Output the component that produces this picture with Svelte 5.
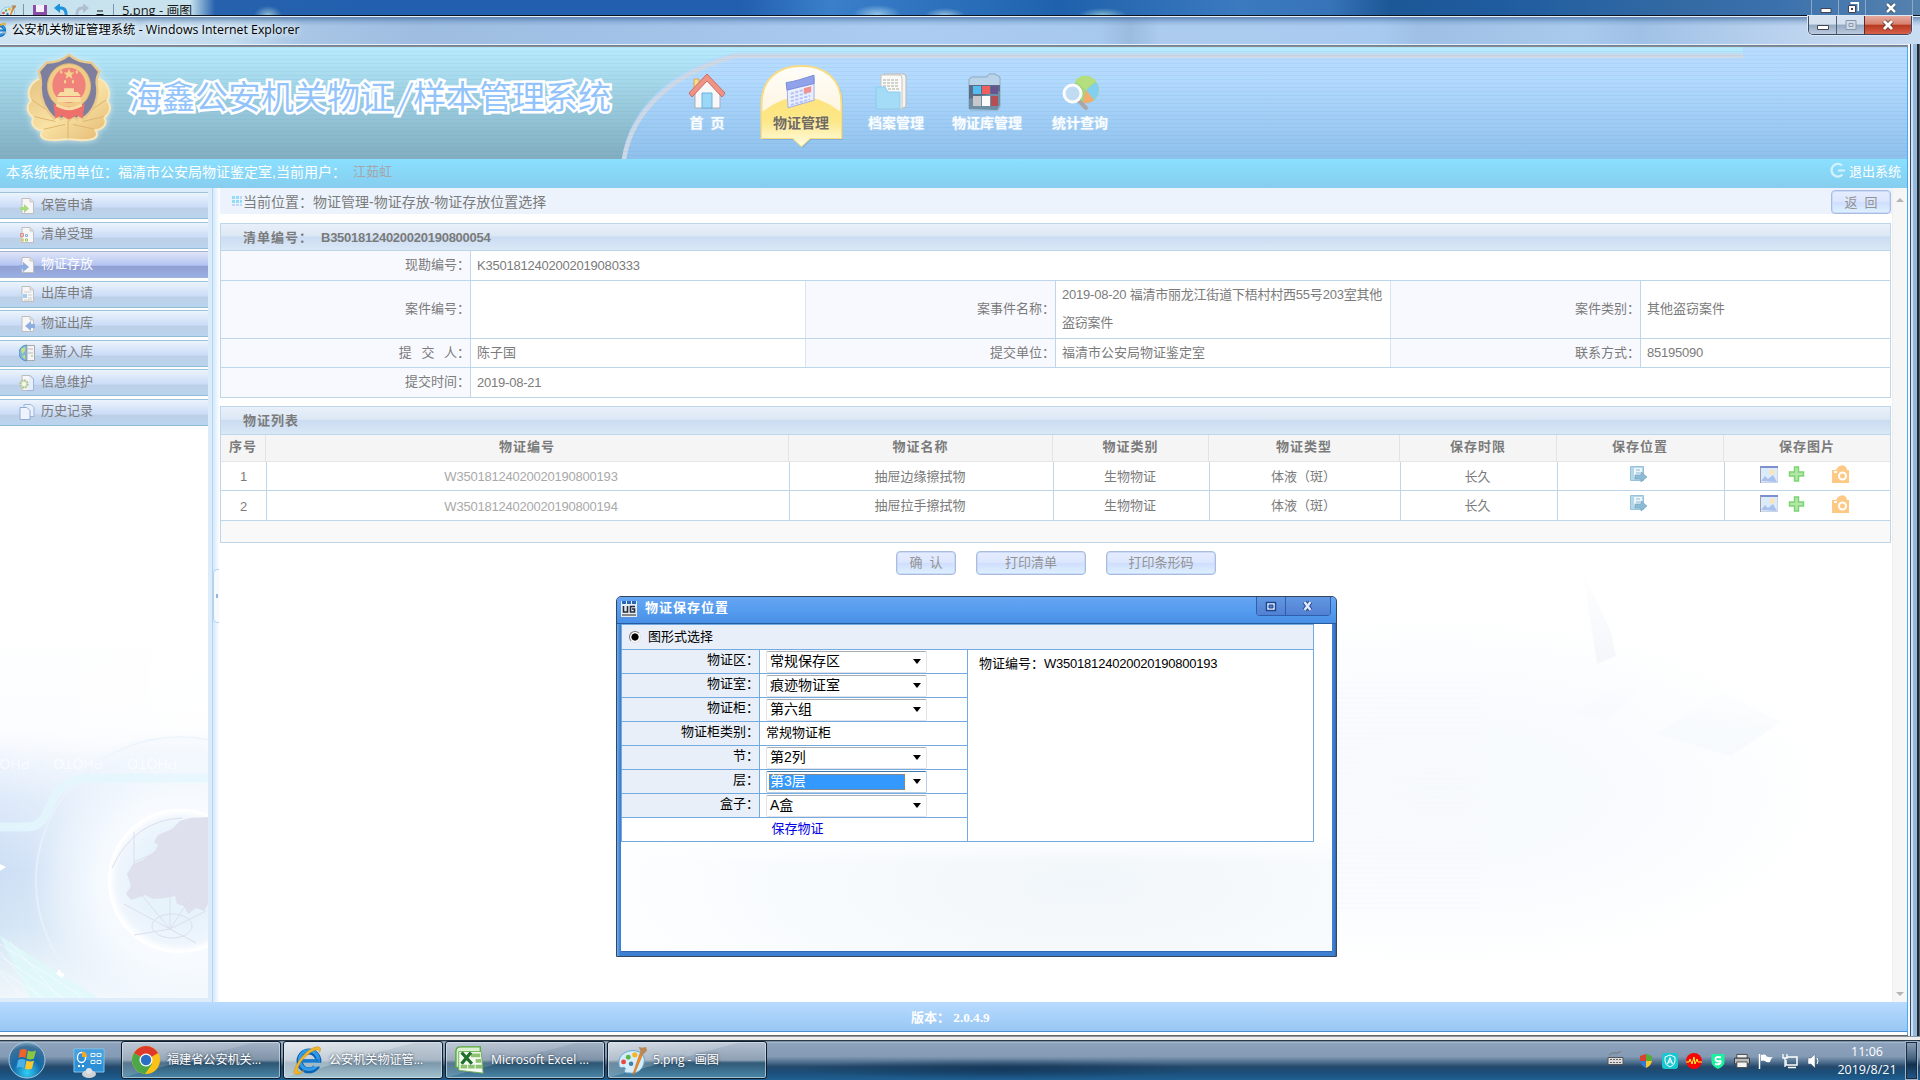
<script>
  const nav = [
    { label: '首 页', icon: 'home' },
    { label: '物证管理', icon: 'calendar', active: true },
    { label: '档案管理', icon: 'docs' },
    { label: '物证库管理', icon: 'box' },
    { label: '统计查询', icon: 'search' }
  ];
  const menu = [
    { label: '保管申请', icon: 'in' },
    { label: '清单受理', icon: 'list' },
    { label: '物证存放', icon: 'store', active: true },
    { label: '出库申请', icon: 'page' },
    { label: '物证出库', icon: 'out' },
    { label: '重新入库', icon: 'globe' },
    { label: '信息维护', icon: 'gear' },
    { label: '历史记录', icon: 'copy' }
  ];
  const heads = ['序号', '物证编号', '物证名称', '物证类别', '物证类型', '保存时限', '保存位置', '保存图片'];
  const rows = [
    ['1', 'W35018124020020190800193', '抽屉边缘擦拭物', '生物物证', '体液（斑）', '长久'],
    ['2', 'W35018124020020190800194', '抽屉拉手擦拭物', '生物物证', '体液（斑）', '长久']
  ];
  const fields = [
    { label: '物证区：', value: '常规保存区', select: true },
    { label: '物证室：', value: '痕迹物证室', select: true },
    { label: '物证柜：', value: '第六组', select: true },
    { label: '物证柜类别：', value: '常规物证柜' },
    { label: '节：', value: '第2列', select: true },
    { label: '层：', value: '第3层', select: true, focus: true },
    { label: '盒子：', value: 'A盒', select: true }
  ];
  const tasks = [
    { label: '福建省公安机关...', icon: 'chrome' },
    { label: '公安机关物证管...', icon: 'ie', active: true },
    { label: 'Microsoft Excel ...', icon: 'excel' },
    { label: '5.png - 画图', icon: 'paint', lit: true }
  ];
</script>

{#snippet ieLogo(size)}
  <svg width={size} height={size} viewBox="0 0 32 32">
    <circle cx="17" cy="17" r="10" fill="none" stroke="#0b62b4" stroke-width="6.5" />
    <circle cx="17" cy="16" r="10" fill="none" stroke="#2f9be8" stroke-width="3.5" />
    <path d="M11 15h13v4H11z" fill="#d9effc" />
    <path d="M8 15h20v4H8z" fill="#1a7acb" />
    <path d="M22 19h9v4h-9z" fill="#9fb9c9" />
    <path d="M29 3C25-1 14 6 7 16S-1 33 5 31c2 0 5-2 7-4-4 2-7 3-7 0 0-5 5-12 11-17S29 3 28 8c1-1 2-3 1-5z" fill="#f2b527" stroke="#c98a12" stroke-width=".5" />
  </svg>
{/snippet}

{#snippet palette(size)}
  <svg width={size} height={size} viewBox="0 0 32 32">
    <path d="M2 19C2 11 9 6 17 6s13 5 12 12-6 12-13 12c-4 0-8 0-8-2s2-3 0-4-6 3-6-5z" fill="#d5ecf9" stroke="#5fa5cf" />
    <circle cx="7" cy="18" r="2.6" fill="#e8473c" /><circle cx="12" cy="13" r="2.6" fill="#5cb548" /><circle cx="19" cy="10.500" r="2.800" fill="#f6b52d" /><circle cx="15" cy="20" r="2.400" fill="#3f7fa8" />
    <path d="M24 10l3 1-9 21-1-1z" fill="#ef8a24" stroke="#b9600f" stroke-width=".5" />
    <path d="M24 10l1-4-2-4 4 1 4-1 1 4-5 5z" fill="#b98655" />
  </svg>
{/snippet}

{#snippet navIcon(name)}
  <svg class="nicon" width="38" height="38" viewBox="0 0 38 38">
    {#if name === 'home'}
      <path d="M6 19V7h5v7" fill="#f7dc8a" stroke="#d9a352" />
      <path d="M7 19L19 6l13 14v16H7z" fill="#f8f8fa" stroke="#a9adb8" />
      <path d="M14 21h10v15H14z" fill="#9bd8f7" stroke="#6eb0d8" />
      <path d="M19 2L1 21l3 4L19 9l15 16 3-4z" fill="#f09384" stroke="#c86d63" />
    {:else if name === 'calendar'}
      <path d="M4 14l29-9v24L5 37z" fill="#e9efff" stroke="#9aa8e8" />
      <path d="M3 10c9-1 20-5 30-8v9L4 18z" fill="#8fa2ea" stroke="#7487d6" />
      <path d="M8 22l20-6M8 26l21-6M8 30l21-6M8 34l21-6" stroke="#b3c2f6" stroke-width="2" stroke-dasharray="3.500 1.500" />
      <path d="M22 16l8-2v6l-8 2z" fill="#f0928e" />
    {:else if name === 'docs'}
      <path d="M12 2h19q3 0 3 3v28q0 3-3 3H15z" fill="#f4f4f1" stroke="#bab9b6" />
      <path d="M9 3h18q3 0 3 3v31H9z" fill="#fafaf7" stroke="#c5c4c0" />
      <path d="M11 8h16M11 11h16M11 14h16M16 17h11" stroke="#a9a9a5" stroke-dasharray="3 1" />
      <path d="M4 15h9l3 5h12v17H4z" fill="#a4dcf8" stroke="#8accee" />
    {:else if name === 'box'}
      <path d="M4 6l3-2h15l2-3h6l5 3v30l-2 3H6l-2-1z" fill="#b9d3e8" stroke="#8fa9bf" />
      <path d="M4 12v24l28 1 3-5V12z" fill="#5a6d84" />
      <path d="M4 26l31-8v14l-3 5H4z" fill="#8fcfe4" opacity=".35" />
      <path d="M8 13h8v8H8z" fill="#53bdf1" /><path d="M17 13h8v8h-8z" fill="#ee5f5d" /><path d="M26 13h7v8h-7z" fill="#66558e" />
      <path d="M8 23h8v10H8z" fill="#c8c8cc" /><path d="M17 23h8v10h-8z" fill="#fbfbfb" /><path d="M26 23h7v10h-7z" fill="#b64f54" />
    {:else}
      <circle cx="24" cy="17" r="13" fill="#a4d57a" />
      <path d="M24 17L13 8a13 13 0 0 1 21 0z" fill="#b4df7f" /><path d="M24 17l10-8a13 13 0 0 1-2 18z" fill="#83cff0" /><path d="M24 17l8 10a13 13 0 0 1-11 3z" fill="#f5ab70" />
      <path d="M17 28l7 7" stroke="#a9a8a8" stroke-width="4" stroke-linecap="round" />
      <circle cx="10.500" cy="20.500" r="8.500" fill="#bfdcf3" stroke="#fdfdfd" stroke-width="3" />
    {/if}
  </svg>
{/snippet}

{#snippet menuIcon(name)}
  <svg width="16" height="18" viewBox="0 0 16 18">
    {#if name === 'globe'}
      <path d="M8 1a8 8 0 0 0 0 16z" fill="#7fb6dc" stroke="#5795c2" /><path d="M2 5l4-2v4l-3 3zM3 12l3-1v4z" fill="#c9e07e" />
      <path d="M8 1.500h7.500v15H8z" fill="#f4f4f6" stroke="#aaa" /><path d="M9 5h5M9 9h5" stroke="#bbb" /><path d="M12 12h2" stroke="#8c7" />
    {:else if name === 'copy'}
      <path d="M5 1.500h7l3 3v9H5z" fill="#e8f0fc" stroke="#9fb4d8" /><path d="M1 4.500h7l3 3v9H1z" fill="#eef4fd" stroke="#93abd4" />
    {:else}
      <path d="M3 1.500h8l3.500 3.500v11.500H3z" fill="#f7f7f7" stroke="#bfbdbd" /><path d="M11 1.500V5h3.500" fill="#ddd" stroke="#c9c9c9" />
      {#if name === 'in'}
        <path d="M1 10h4V7l5 4.500L5 16v-3H1z" fill="#a8d97f" />
      {:else if name === 'list'}
        <path d="M1.500 7.500h3v3h-3z" fill="none" stroke="#e98a76" /><path d="M6.500 8.500h2v2h-2z" fill="none" stroke="#8fabe3" /><path d="M2.500 13h2v2h-2z" fill="none" stroke="#e8c558" /><path d="M6.500 13h2v2h-2z" fill="none" stroke="#97c76d" />
      {:else if name === 'store'}
        <path d="M0 9h4V6l6 5-6 5v-3H0z" fill="#8fabe0" />
      {:else if name === 'page'}
        <path d="M5 7h7M9 10h4M9 13h4M5 15h8" stroke="#cfcfcf" /><path d="M4 9h4v4H4z" fill="#9fcdf3" />
      {:else if name === 'out'}
        <path d="M16 9h-4V6l-6 5 6 5v-3h4z" fill="#8fadde" />
      {:else}
        <path d="M11 1.500l3.500 3.500v11.500H8" fill="#e6eefc" stroke="#9fb4d8" />
        <circle cx="5" cy="10" r="3.500" fill="#f4f6ea" stroke="#b5c79a" stroke-width="2.500" stroke-dasharray="2 .7" />
      {/if}
    {/if}
  </svg>
{/snippet}

<div class="screen">
  <div class="paintbar">
    <div class="quick">
      {@render palette(16)}
      <i class="sep"></i>
      <svg width="14" height="15" viewBox="0 0 14 15"><path d="M0 1h14v14H0z" fill="#8a4ea6" /><path d="M3 1h8v7H3z" fill="#f6effa" /><path d="M4 11h6v4H4z" fill="#e2d0ec" /></svg>
      <svg width="14" height="15" viewBox="0 0 14 15"><path d="M2 4h5q6 0 5 10" fill="none" stroke="#1f93dc" stroke-width="3" /><path d="M0 4l6-5v10z" fill="#1f93dc" /></svg>
      <svg width="14" height="15" viewBox="0 0 14 15"><path d="M12 4H7Q1 4 2 14" fill="none" stroke="#aebfd2" stroke-width="3" /><path d="M14 4L8-1v10z" fill="#aebfd2" /></svg>
      <svg class="drop" width="8" height="8" viewBox="0 0 8 8"><path d="M1 1h6" stroke="#111" /><path d="M0 4h8L4 8z" fill="#111" /></svg>
      <i class="sep"></i>
      <span>5.png - 画图</span>
    </div>
    <div class="pctl">
      <span><svg width="12" height="12" viewBox="0 0 12 12"><path d="M1 6.500h10v4H1z" fill="#fff" stroke="#445" /></svg></span>
      <span><svg width="12" height="12" viewBox="0 0 12 12"><path d="M3.500 1h8v8" fill="none" stroke="#fff" stroke-width="2" /><path d="M1.500 3.500h7v7h-7z" fill="#fff" stroke="#445" /><path d="M4 6h2v2H4z" fill="#445" /></svg></span>
      <span class="wide"><svg width="12" height="12" viewBox="0 0 12 12"><path d="M2 2l8 8M10 2l-8 8" stroke="#345" stroke-width="4" /><path d="M2 2l8 8M10 2l-8 8" stroke="#fff" stroke-width="2.500" /></svg></span>
    </div>
  </div>

  <div class="titlebar">
    <span class="tlogo">{@render ieLogo(16)}</span>
    <span class="ttext">公安机关物证管理系统 - Windows Internet Explorer</span>
    <div class="wctl">
      <span class="wmin"><svg width="12" height="12" viewBox="0 0 12 12"><path d="M.5 6.500h11v4H.5z" fill="#fff" stroke="#445" /></svg></span>
      <span class="wmax"><svg width="12" height="12" viewBox="0 0 12 12"><path d="M1 1.500h10v9H1z" fill="#cfdaea" stroke="#8a97a9" /><path d="M4 4.500h4v3H4z" fill="none" stroke="#8a97a9" /></svg></span>
      <span class="wclose"><svg width="14" height="12" viewBox="0 0 14 12"><path d="M3 2l8 8M11 2l-8 8" stroke="#5b2c2c" stroke-width="4.500" /><path d="M3 2l8 8M11 2l-8 8" stroke="#fff" stroke-width="3" /></svg></span>
    </div>
  </div>

  <div class="frame">
    <div class="page">
      <header>
        <svg class="arch" width="1907" height="112" viewBox="0 0 1907 112">
          <defs>
            <linearGradient id="sky" x1="0" y1="0" x2="0" y2="1"><stop offset="0" stop-color="#b8dcff" /><stop offset=".3" stop-color="#b2d9fe" /><stop offset="1" stop-color="#8ec0ec" /></linearGradient>
            <pattern id="scan" width="4" height="4" patternUnits="userSpaceOnUse"><path d="M0 .5h4" stroke="#4d8fb5" stroke-opacity=".09" /></pattern>
          </defs>
          <path d="M622 112C628 62 670 22 734 6H1743V0h165v112z" fill="url(#sky)" />
          <path d="M624 112C632 64 672 26 735 9H1743" fill="none" stroke="#cdd9e6" stroke-width="4.500" />
          <path d="M0 0h1908v112H0z" fill="url(#scan)" />
        </svg>
        <svg class="badge" width="90" height="90" viewBox="0 0 92 92">
          <defs><linearGradient id="gold" x1="0" y1="0" x2="1" y2="1"><stop offset="0" stop-color="#e6c382" /><stop offset=".5" stop-color="#f9e2a4" /><stop offset="1" stop-color="#e3b76f" /></linearGradient></defs>
          <path d="M14 28C4 34 3 44 7 50 1 56 4 64 10 67c-4 5 0 13 9 13-6 9 4 12 26 9 22 3 34 0 28-9 8-1 13-7 9-13 6-4 8-12 3-17 4-7 2-17-7-22z" fill="url(#gold)" stroke="#fae8ba" stroke-width="2" />
          <path d="M8 49l18 12M10 66l22 5M20 79l22-5M84 49L66 61M82 66l-22 5M72 79l-22-5M45 65v24" stroke="#dcb56e" fill="none" />
          <path d="M46 3c7 6 15 8 23 8l8 9c-2 5-4 9-2 17 1 15-7 26-15 31l-3-3-3 4-4-3-4 4-4-4-4 3-4-4-3 3C23 60 17 49 17 37c1-8 0-12-2-17l8-9c8 0 16-2 23-8z" fill="#7e7e9f" stroke="#e9c98c" stroke-width="2.500" />
          <ellipse cx="46" cy="35" rx="22" ry="23" fill="#f1cc89" stroke="#e0b873" />
          <ellipse cx="46" cy="34" rx="17" ry="18" fill="#f0827c" />
          <path d="M30 53l8 3h16l8-3-2 15-6-3-8 4-8-4-6 3z" fill="#ed706b" />
          <path d="M46 17l1.500 4h4l-3 2.500 1 4-3.500-2.500-3.500 2.500 1-4-3-2.500h4z" fill="#f6d48c" /><path d="M38 19v3M54 19v3M42 29v3M50 29v3" stroke="#f6d48c" stroke-width="2" />
          <path d="M37 41h18l3 4H34zM34 46h24v5H34zM41 37h10v4H41z" fill="#f8dda2" />
          <path d="M33 54q13 8 26 0" stroke="#f8dda2" stroke-width="3" fill="none" />
        </svg>
        <h1><span>海鑫公安机关物证</span><b>/</b><span>样本管理系统</span></h1>
        <nav>
          {#each nav as n}
            <a class={['n-' + n.icon, { active: n.active }]}>
              {#if n.active}
                <svg class="bubble" width="85" height="86" viewBox="0 0 85 86">
                  <defs><linearGradient id="yel" x1="0" y1="0" x2="0" y2="1"><stop offset="0" stop-color="#fde37c" /><stop offset=".5" stop-color="#fde788" /><stop offset="1" stop-color="#fffde6" /></linearGradient>
                  <linearGradient id="cream" x1="0" y1="0" x2="0" y2="1"><stop offset="0" stop-color="#fffefa" /><stop offset="1" stop-color="#fbeecb" /></linearGradient></defs>
                  <path d="M3 76V40C3 17 19 3 43 3s40 14 40 37v36H51l-8 8-8-8H3z" fill="#5b88ad" opacity=".3" />
                  <path d="M1.500 74V40C1.500 15 18 2 41.500 2s40 13 40 38v34H50l-8.500 8L33 74z" fill="url(#cream)" stroke="#f6dc84" stroke-width="2" />
                  <path d="M2 74V48q39-31 79 0v26H50l-8.500 8L33 74z" fill="url(#yel)" />
                </svg>
              {/if}
              {@render navIcon(n.icon)}
              <span>{n.label}</span>
            </a>
          {/each}
        </nav>
      </header>

      <div class="userbar">
        <span>本系统使用单位：福清市公安局物证鉴定室,当前用户：</span><em>江茹虹</em>
        <a class="logout"><svg width="17" height="17" viewBox="0 0 17 17"><path d="M12 3.500A6.300 6.300 0 1 0 12.500 12.500" fill="none" stroke="#d3f2ff" stroke-width="2.200" /><path d="M8 8.500h7" stroke="#d3f2ff" stroke-width="2" /></svg><span>退出系统</span></a>
      </div>

      <div class="body">
        <aside>
          <div class="menu">
            {#each menu as m}
              <a class={{ active: m.active }}>{@render menuIcon(m.icon)}<span>{m.label}</span></a>
            {/each}
          </div>
          <svg class="world" width="208" height="398" viewBox="0 0 208 398">
            <defs>
              <linearGradient id="wbg" x1="0" y1="0" x2="0" y2="1"><stop offset="0" stop-color="#fff" /><stop offset=".33" stop-color="#fcfdff" /><stop offset=".5" stop-color="#deeafa" /><stop offset=".68" stop-color="#cddff5" /><stop offset=".82" stop-color="#d3e5f5" /><stop offset="1" stop-color="#f0f7fb" /></linearGradient>
              <linearGradient id="wash" x1="0" y1="0" x2="1" y2="0"><stop offset="0" stop-color="#fff" stop-opacity="0" /><stop offset="1" stop-color="#fff" stop-opacity=".7" /></linearGradient>
              <radialGradient id="halo" gradientUnits="userSpaceOnUse" cx="180" cy="281" r="152"><stop offset="0" stop-color="#fff" /><stop offset=".55" stop-color="#f7fbff" stop-opacity=".9" /><stop offset=".8" stop-color="#eef5fd" stop-opacity=".6" /><stop offset="1" stop-color="#e4effb" stop-opacity="0" /></radialGradient>
              <radialGradient id="ball"><stop offset=".6" stop-color="#e7f3fb" /><stop offset=".88" stop-color="#eef5fd" /><stop offset="1" stop-color="#fff" /></radialGradient>
            </defs>
            <path d="M0 0h208v398H0z" fill="url(#wbg)" />
            <path d="M0 0h208v398H0z" fill="url(#wash)" />
            <circle cx="180" cy="281" r="152" fill="url(#halo)" />
            <circle cx="180" cy="281" r="144" fill="none" stroke="#e9f3fc" stroke-width="2" opacity=".7" />
            <path d="M0 227h26c34 0 12-49 66-49h116" fill="none" stroke="#e3f6fc" stroke-width="9" opacity=".8" />
            <circle cx="180" cy="281" r="71" fill="url(#ball)" stroke="#fff" stroke-width="2" />
            <path d="M208 217l-18 1-10 3-8 8-14 6-4 7 4 3-3 6-12 9-10 4-6 10 4 12-5 8 5 6 6-2 8-3 8 4 12-1 10-2 2 8 7 2 4 8 8-6 8 3 4-7z" fill="#dfe0ee" />
            <path d="M170 329l-46-25M170 329l-30-36M170 329V288M170 329l24-36M170 329l36-18M170 329l-36 6M170 329l26 14M112 268q22-48 70-50M134 232v36M134 262l24-10" stroke="#dddeed" fill="none" />
            <ellipse cx="172" cy="326" rx="20" ry="12" fill="none" stroke="#dddeed" />
            <path d="M0 336l98 62H30z" fill="#dff9fa" opacity=".8" />
            <path d="M0 344l84 54M0 356l64 42M0 370l44 28M10 342l50 56M0 352l40 46M0 372l22 26" stroke="#fff" stroke-opacity=".5" fill="none" />
            <path d="M0 264l6 3-6 4zM56 374l3-5 3 4 3 1-3 4-3-2z" fill="#fff" />
            <text class="ph" transform="translate(30 159) rotate(180)">PHOTO</text>
            <text class="ph" transform="translate(103 159) rotate(180)">PHOTO</text>
            <text class="ph" transform="translate(177 159) rotate(180)">PHOTO</text>
          </svg>
        </aside>
        <div class="split"><i></i></div>

        <main>
          <svg class="backdrop" width="1092" height="490" viewBox="0 0 1092 490">
            <defs>
              <radialGradient id="fog"><stop offset="0" stop-color="#f6fafd" /><stop offset=".6" stop-color="#fafcfe" /><stop offset="1" stop-color="#fff" stop-opacity="0" /></radialGradient>
              <linearGradient id="fadeup" x1="0" y1="0" x2="0" y2="1"><stop offset="0" stop-color="#f4f6fa" stop-opacity="0" /><stop offset="1" stop-color="#f4f6fa" /></linearGradient>
              <linearGradient id="pad" x1="0" y1="0" x2="0" y2="1"><stop offset="0" stop-color="#f6fafc" stop-opacity="0" /><stop offset="1" stop-color="#f6fafc" /></linearGradient>
              <pattern id="rule" width="5" height="5" patternUnits="userSpaceOnUse"><path d="M0 1h5" stroke="#f7f9fc" stroke-opacity=".6" stroke-width="2" /></pattern>
            </defs>
            <ellipse cx="640" cy="280" rx="450" ry="205" fill="url(#fog)" />
            <path d="M480 170h200v230H480z" fill="url(#rule)" />
            <path d="M783 60l28 60 5 24-19 8z" fill="url(#fadeup)" />
            <path d="M770 200l60-32 15 8-40 32zM856 222l65-42 60 30-50 34z" fill="url(#pad)" />
          </svg>
          <div class="crumb">
            <svg width="10" height="10" viewBox="0 0 10 10"><path d="M0 0h3v3H0zM4 0h3v3H4zM0 4h3v3H0zM4 4h3v3H4zM8 4h2v3H8z" fill="#93dcf5" /><path d="M8 0h2v3H8zM0 8h3v2H0zM4 8h3v2H4zM8 8h2v2H8z" fill="#bcd8fb" /></svg>
            <span>当前位置：物证管理-物证存放-物证存放位置选择</span>
            <button class="btn back">返&nbsp; 回</button>
          </div>

          <section class="info">
            <div class="cap">清单编号：<span class="num">B35018124020020190800054</span></div>
            <div class="r one"><label>现勘编号：</label><p class="num low">K3501812402002019080333</p></div>
            <div class="r three tall">
              <label>案件编号：</label><p></p>
              <label>案事件名称：</label><p class="num">2019-08-20 福清市丽龙江街道下梧村村西55号203室其他盗窃案件</p>
              <label>案件类别：</label><p>其他盗窃案件</p>
            </div>
            <div class="r three short">
              <label class="spread">提 交 人：</label><p>陈子国</p>
              <label>提交单位：</label><p>福清市公安局物证鉴定室</p>
              <label>联系方式：</label><p class="num">85195090</p>
            </div>
            <div class="r one last"><label>提交时间：</label><p class="num low">2019-08-21</p></div>
          </section>

          <section class="list">
            <div class="cap">物证列表</div>
            <div class="g head">{#each heads as h}<span>{h}</span>{/each}</div>
            {#each rows as row}
              <div class="g row">
                {#each row as c, i}<span class={{ num: i < 2, code: i === 1 }}>{c}</span>{/each}
                <span class="loc">
                  <svg width="18" height="17" viewBox="0 0 18 17"><path d="M.5.500h13v14H.5z" fill="#b5d7ea" stroke="#98c2da" /><path d="M4 2h8v9H4z" fill="#edf6fb" /><path d="M6 4h4M6 7h4" stroke="#8db8d2" /><path d="M5 9h6V6l6 5-6 5v-3H5z" fill="#8fbcd5" stroke="#6aa0bf" stroke-width=".6" /></svg>
                </span>
                <span class="pics">
                  <svg width="18" height="17" viewBox="0 0 18 17"><path d="M.5.500h17v16H.5z" fill="#dcebfb" stroke="#c9d4e8" /><path d="M0 1h18" stroke="#7d8fcd" stroke-width="2" /><path d="M.5 1v16" stroke="#9a9eaa" /><circle cx="12" cy="6" r="2.500" fill="#fde3b0" /><path d="M1 15l4-5 3 3 5-4 4 7z" fill="#a9c1ec" /></svg>
                  <svg width="17" height="16" viewBox="0 0 17 16"><path d="M6.500 1h4v5h5v4h-5v5h-4v-5h-5V6h5z" fill="#b2e8a5" stroke="#7ed474" stroke-width="1.500" /></svg>
                  <svg width="17" height="18" viewBox="0 0 17 18"><path d="M0 5h4l2-3q5-3.500 8 0l1 3h2v13H0z" fill="#fdc985" /><circle cx="10.500" cy="11" r="3.500" fill="none" stroke="#fff" stroke-width="2" /><path d="M2 6h3v2H2z" fill="#fff" /></svg>
                </span>
              </div>
            {/each}
            <div class="foot"></div>
          </section>

          <div class="actions">
            <button class="btn">确&nbsp; 认</button>
            <button class="btn mid">打印清单</button>
            <button class="btn mid">打印条形码</button>
          </div>
        </main>

        <div class="scroll"><i class="up"></i><i class="down"></i></div>
      </div>

      <footer><span>版本：</span> 2.0.4.9</footer>
    </div>
  </div>
  <div class="under"></div>

  <div class="dialog">
    <div class="dhead">
      <svg width="16" height="16" viewBox="0 0 16 16"><path d="M0 0h16v16H0z" fill="#e8edf2" /><path d="M1 0h4v3H1zM6 0h4v3H6zM11 0h4v3h-4z" fill="#2c67b5" /><path d="M2.500 5v6h4V5M14 5.500H9.500v5.500H13.500V8H11" fill="none" stroke="#222c3c" stroke-width="1.600" /><path d="M1 14h14" stroke="#888" stroke-width="2" /></svg>
      <b>物证保存位置</b>
      <div class="dctl">
        <span><svg width="12" height="11" viewBox="0 0 12 11"><path d="M1.500 1.500h9v8h-9z" fill="#e6efff" stroke="#1f478d" stroke-width="1.500" /><path d="M4 4h4v3H4z" fill="#4f7fd4" stroke="#1f478d" /></svg></span>
        <span class="x"><svg width="14" height="12" viewBox="0 0 14 12"><path d="M3.500 2l6 8M9.500 2l-6 8" stroke="#234587" stroke-width="4.500" /><path d="M3.500 2l6 8M9.500 2l-6 8" stroke="#dce8fd" stroke-width="2.500" /></svg></span>
      </div>
    </div>
    <div class="dbody">
      <div class="dtable">
        <div class="dtop"><i class="radio"></i><span>图形式选择</span></div>
        <div class="dleft">
          {#each fields as f}
            <div class="drow">
              <label>{f.label}</label>
              <div class="dval">
                {#if f.select}
                  <div class={['sel', { focus: f.focus }]}><span>{f.value}</span><i></i></div>
                {:else}{f.value}{/if}
              </div>
            </div>
          {/each}
          <div class="drow save"><a>保存物证</a></div>
        </div>
        <div class="dright">物证编号：<span class="num">W35018124020020190800193</span></div>
      </div>
    </div>
  </div>

  <div class="taskbar">
    <svg class="orb" width="38" height="38" viewBox="0 0 38 38">
      <defs><radialGradient id="orbg" cx=".5" cy=".85" r=".9"><stop offset="0" stop-color="#2fd0f5" /><stop offset=".45" stop-color="#1469a8" /><stop offset=".8" stop-color="#3f7199" /><stop offset="1" stop-color="#a9c4d8" /></radialGradient></defs>
      <circle cx="19" cy="19" r="18" fill="url(#orbg)" stroke="#a6c9de" />
      <path d="M12 9q4-2 7 0l-1.500 8q-3-2-7 0z" fill="#f0622b" /><path d="M20 9.500q4 2 8 0l-2 8q-4 2-7.500 0z" fill="#8cc63f" /><path d="M10 19q4-2 7.500 0L16 27q-4-2-7.500 0z" fill="#4bb1ea" /><path d="M18.500 19.500q4 2 7.500 0l-2 8q-4 2-7 0z" fill="#fdc62f" />
    </svg>
    <svg class="cp" width="32" height="30" viewBox="0 0 32 30"><path d="M1 1h30v23H1z" fill="#2d8fd6" stroke="#7cc7f2" /><path d="M2 2h28v10H2z" fill="#5fb0e6" opacity=".5" /><ellipse cx="8.500" cy="9.500" rx="4" ry="5" fill="#2d8fd6" stroke="#fff" stroke-width="1.300" /><path d="M9 9V3.500q5 0 5 5.500z" fill="#f6a728" /><path d="M18 5.500h4v3h-4zM24 5.500h4v3h-4zM18 12.500h4v3h-4zM24 12.500h4v3h-4z" fill="none" stroke="#e8f6ff" /><path d="M5 18h2M9 18h2" stroke="#fff" stroke-width="2" /><ellipse cx="16" cy="26" rx="7" ry="4" fill="#cfd3d6" /><circle cx="16" cy="23" r="3" fill="#e2e5e7" /></svg>
    {#each tasks as t}
      <div class={['task', { active: t.active, lit: t.lit }]}>
        {#if t.icon === 'chrome'}
          <svg width="30" height="30" viewBox="0 0 30 30"><circle cx="15" cy="15" r="14" fill="#fbc116" /><path d="M15 15L2.900 8A14 14 0 0 1 27.100 8z" fill="#dd3a2c" /><path d="M15 15L2.900 8A14 14 0 0 0 14 29l7-10z" fill="#4ba748" /><circle cx="15" cy="15" r="6.500" fill="#fff" /><circle cx="15" cy="15" r="5.200" fill="#2a6fc4" /></svg>
        {:else if t.icon === 'ie'}
          {@render ieLogo(32)}
        {:else if t.icon === 'excel'}
          <svg width="32" height="32" viewBox="0 0 32 30"><path d="M1 6q0-5 5-5h21v22H1z" fill="#d9f0d0" stroke="#58ab38" stroke-width="1.500" /><path d="M4 6h24l2 23-26-3z" fill="#f7fbf4" stroke="#6fae53" /><path d="M17 8h10v4H17zM22 14h6v4h-6zM22 20h7v4h-7zM14 20h7v4h-7zM6 20h7v4H6z" fill="#8cc270" /><path d="M7 7l11 12M17 7L7 19" stroke="#1f6e2b" stroke-width="3.500" /></svg>
        {:else}
          {@render palette(32)}
        {/if}
        <span>{t.label}</span>
      </div>
    {/each}
    <div class="tray">
      <svg class="kb" width="17" height="16" viewBox="0 0 17 16"><path d="M1 6.500h15v7H1z" fill="#ddd" stroke="#555" /><path d="M3 8.500h11M3 11.500h11" stroke="#666" stroke-dasharray="2 1" /><path d="M2 4q3-3 6-2t6-2" stroke="#777" fill="none" /></svg>
      <svg width="16" height="16" viewBox="-1.500 0 16 16"><path d="M6.500 1l-6 2v5H6.500z" fill="#d8432f" /><path d="M6.500 1l6 2v5h-6z" fill="#56ab39" /><path d="M.5 8q1 5 6 7V8z" fill="#3578d0" /><path d="M12.500 8q-1 5-6 7V8z" fill="#f6c52f" /></svg>
      <svg width="16" height="16" viewBox="0 0 16 16"><rect width="16" height="16" rx="3" fill="#18c8d0" /><path d="M8 2l5 2v4q0 4-5 6-5-2-5-6V4z" fill="none" stroke="#fff" /><path d="M5.500 11L8 5l2.500 6M6.500 9h3" fill="none" stroke="#fff" stroke-width="1.200" /></svg>
      <svg width="16" height="16" viewBox="0 0 16 16"><circle cx="8" cy="8" r="8" fill="#fb0404" /><path d="M0 9h3l1-3 2 5 2-7 1 7 2-5 1 3h4" fill="none" stroke="#ff3" /></svg>
      <svg width="16" height="16" viewBox="-1.500 0 16 16"><path d="M0 1h13v8q0 4-6.500 7Q0 13 0 9z" fill="#19f0a0" /><path d="M9.500 4.500Q4 3 4 6t5 2q1 4-5.500 3" fill="none" stroke="#fff" stroke-width="2" /></svg>
      <svg width="16" height="16" viewBox="0 0 17 16"><path d="M3 1h11v4H3z" fill="#eee" stroke="#444" /><path d="M.5 5h16v6H.5z" fill="#bbb" stroke="#333" /><path d="M3 9h11v6H3z" fill="#f5f5f5" stroke="#444" /></svg>
      <svg width="16" height="16" viewBox="0 0 16 16"><path d="M1.500 1v15" stroke="#fff" stroke-width="1.500" /><path d="M3 2q3-1 5 0v1q3 2 7 1-3 2-3 5-3 1-5-1-2-1-4 0z" fill="#fff" /></svg>
      <svg width="16" height="16" viewBox="0 0 16 16"><path d="M5 4h10v8H4V7M6 14.500h8" fill="none" stroke="#fff" stroke-width="1.500" /><path d="M1 1v4h4V1M3 5v9" fill="none" stroke="#fff" stroke-width="1.300" /></svg>
      <svg width="16" height="16" viewBox="-1 0 16 16"><path d="M1 5h3l4-4v14l-4-4H1z" fill="#fff" stroke="#567" stroke-width=".5" /><path d="M10 5q2 3 0 6" fill="none" stroke="#fff" /></svg>
    </div>
    <div class="clock"><span>11:06</span><span>2019/8/21</span></div>
    <div class="peek"></div>
  </div>
</div>

<style>
  :global(body) { margin: 0; overflow: hidden; }
  .screen { position: relative; width: 1920px; height: 1080px; overflow: hidden; display: flex; flex-direction: column; font: 13px "Liberation Sans", "Noto Sans CJK SC", sans-serif; color: #7b7b7b; background: #fff; }
  .screen * { box-sizing: border-box; }
  svg { display: block; flex: none; }
  i, em { font-style: normal; }
  p { margin: 0; }
  .num { letter-spacing: -0.22px; }

  .paintbar { height: 15px; display: flex; justify-content: space-between; background: radial-gradient(ellipse 14px 9px at 268px 15px, #8fb9d0, transparent), radial-gradient(ellipse 24px 9px at 877px 14px, #8fc1e6, transparent), radial-gradient(ellipse 20px 7px at 945px 15px, #8fbcdc, transparent), radial-gradient(ellipse 24px 7px at 1103px 15px, #80b5ce, transparent), linear-gradient(90deg, #2b65ac 0, #225fae 380px, #225fae 740px, #3a7fca 830px, #1f61ac 1060px, #3b7abf 1240px, #3773b8 1330px, #1c5797 1390px, #1f5c9f 1500px, #336aa4 1680px, #3b72ae 1780px, #5581ad); }
  .quick { width: 215px; height: 15px; padding-top: 4px; display: flex; gap: 7px; background: linear-gradient(90deg, #c8e3ee 190px, transparent); color: #1b1b1b; font: 12.9px/13px "Open Sans", "Noto Sans CJK SC", sans-serif; }
  .quick span { white-space: nowrap; margin-left: 1px; }
  .quick .drop { margin: 6px 2px 0 0; }
  .quick .sep:first-of-type { margin-right: 2px; }
  .sep { width: 1px; height: 11px; background: #7d95a5; }
  .pctl { display: flex; width: 106px; margin-right: 3px; }
  .pctl span { width: 27px; border-left: 1px solid #8fa9c4; padding: 2px 0 0 8px; height: 15px; }
  .pctl .wide { width: 48px; padding-left: 19px; border-right: 1px solid #8fa9c4; }

  .titlebar { height: 29px; position: relative; border-top: 1px solid #0c1420; box-shadow: inset 0 1px 0 #e8f1fa; display: flex; align-items: center; background: linear-gradient(180deg, rgba(35,80,135,.55) 1px, rgba(60,110,170,.2) 6px, transparent 10px), linear-gradient(90deg, #cfe4f2 0, #c3dcee 230px, #a9c6e6 300px, #9ebde0 420px, #a2c2e8 640px, #accdf1 900px, #a7c9ed 1100px, #9bbbdf 1130px, #accbee 1160px, #a9caf0 1380px, #9fc0e4 1420px, #a9caed 1580px, #a0c1e6 1640px, #bdd4ef 1800px, #c8dcf2); color: #000; font: 12.35px/16px "Open Sans", "Noto Sans CJK SC", sans-serif; }
  .tlogo { width: 7px; height: 16px; overflow: hidden; display: flex; justify-content: flex-end; }
  .ttext { margin-left: 5px; white-space: nowrap; text-shadow: 0 0 8px #fff, 0 0 8px #fff; }
  .wctl { position: absolute; right: 8px; top: 0; height: 19px; display: flex; border: 1px solid #3c4c62; border-top: 0; border-radius: 0 0 5px 5px; overflow: hidden; box-shadow: 0 0 0 1px #dbe8f5; }
  .wctl span { display: grid; place-items: center; background: linear-gradient(#d5e1ee 45%, #93a9c2 50%, #bccbdf); }
  .wmin { width: 28px; border-right: 1px solid #4f6178; }
  .wmax { width: 27px; }
  .wctl .wclose { width: 47px; background: linear-gradient(#e6aa9f 0, #d8806f 45%, #b73a20 52%, #d9604a); border-left: 1px solid #5b2a2a; }

  .frame { height: 992px; padding: 3px 12px 0 0; background: linear-gradient(90deg, transparent 1908px, #f6fafd 1908px, #f6fafd 1910px, #3d4a5c 1910px, #3d4a5c 1911px, #cfe3f5 1911px, #cfe3f5 1913px, #96b8dd 1913px, #96b8dd 1917px, #202a34 1917px, #202a34 1919px, #596068 1919px), linear-gradient(#e5eff8 0, #e5eff8 1px, #3f5069 1px, #a5b1c0 2px, #6d6660 3px); }
  .page { width: 1908px; height: 988px; border-right: 1px solid #4da9f0; display: flex; flex-direction: column; background: #fff; }
  header { position: relative; height: 112px; flex: none; display: flex; background: linear-gradient(#b9ebff, #9dcfe1 45%, #82adc1); }
  .arch { position: absolute; left: 0; top: 0; }
  .badge { position: relative; margin: 5px 0 0 24px; filter: drop-shadow(0 0 3px #d9edf0); }
  h1 { position: relative; margin: 24px 0 0 15px; width: 560px; display: flex; font: 400 33px/48px "Noto Sans CJK SC", sans-serif; color: #93c3fb; -webkit-text-stroke: 5px #fff; paint-order: stroke fill; white-space: nowrap; }
  h1 b { width: 20px; font-weight: 400; text-align: center; transform: skewX(-8deg); }
  nav { position: relative; display: flex; }
  nav a { position: relative; height: 112px; padding-top: 25px; display: flex; flex-direction: column; align-items: center; color: #fafdff; font: 700 14px/20px "Noto Sans CJK SC", sans-serif; white-space: nowrap; }
  nav a span { margin-top: 2px; position: relative; text-shadow: 0 0 2px rgba(255,255,255,.5); }
  .nicon { position: relative; }
  .n-home { width: 72px; margin-left: -18px; word-spacing: 4px; }
  .n-calendar { width: 82px; margin-left: 17px; color: #716a5c; }
  .n-calendar .nicon { transform: scale(.93); }
  .n-docs { width: 82px; margin-left: 13px; }
  .n-docs .nicon { left: -5px; }
  .n-box { width: 90px; margin-left: 5px; }
  .n-box .nicon { left: -3px; top: 1px; }
  .n-search { width: 80px; margin-left: 8px; }
  .n-search .nicon { top: 1px; left: 1px; }
  .bubble { position: absolute; left: 0; top: 17px; }

  .userbar { height: 29px; flex: none; display: flex; align-items: center; padding: 0 6px 6px 6px; background: linear-gradient(#8ae0ff, #86cdee); color: #fff; font-size: 14px; }
  .userbar span { white-space: nowrap; }
  .userbar em { margin-left: 7px; font-size: 13px; color: #a3a5ab; }
  .logout { margin-left: auto; display: flex; gap: 2px; align-items: center; font-size: 13px; }

  .body { height: 814px; flex: none; display: flex; }
  aside { width: 212px; padding: 4px 4px 4px 0; background: #dcecfa; display: flex; flex-direction: column; justify-content: space-between; }
  .menu { background: #fff; display: grid; grid-template-rows: repeat(8, 29.5px); height: 408px; }
  .menu a { height: 27px; display: flex; align-items: center; padding-left: 19px; gap: 6px; border-top: 1px solid #9fc3da; border-bottom: 1px solid #90bcd6; background: linear-gradient(#ecf4fc, #cbdcf7 55%, #bdd0e8 62%, #bad4ee); }
  .menu a span { margin-top: -5px; }
  .menu a.active { color: #fff; border-color: #a3b2d0; background: linear-gradient(#dfe5f6, #b3c4f3 53%, #929fd1 57%, #99afe4); }
  .ph { font: 14px "Liberation Sans", sans-serif; fill: #fff; opacity: .6; }
  .split { width: 8px; border-left: 1px solid #b0d5f4; background: linear-gradient(90deg, #d5e9fa, #fff); padding-top: 381px; }
  .split i { display: block; height: 54px; width: 6px; border: 1px solid #b9cfe6; border-right: 0; border-radius: 5px 0 0 5px; background: linear-gradient(90deg, transparent 1px, #98b4d8 1px, #98b4d8 3px, transparent 3px) center/4px 4px no-repeat, #f5faff; }

  main { position: relative; width: 1673px; }
  main > :not(.backdrop) { position: relative; }
  .backdrop { position: absolute; right: 0; bottom: 0; }
  .crumb { height: 26px; display: flex; background: #ecf3fc; padding-left: 12px; font-size: 14px; line-height: 29px; }
  .crumb svg { margin: 8px 1px 0 0; }
  .crumb span { white-space: nowrap; }
  .btn { display: block; width: 60px; height: 24px; padding: 0; border: 1px solid #a9bcdd; border-radius: 4px; background: linear-gradient(#e6ecfe, #dbe6fe 48%, #cfdefe 52%, #def2ff); color: #939393; font: 13px/20px "Liberation Sans", "Noto Sans CJK SC", sans-serif; box-shadow: inset 0 0 0 1px #cbdafa; }
  .back { margin: 2px 1px 0 auto; padding: 1px 0 0; }

  section { width: 1671px; border: 1px solid #bdd6ea; }
  .cap { height: 27px; padding-left: 22px; font-weight: 700; line-height: 27px; letter-spacing: 1px; border-bottom: 1px solid #bdd6ea; background: linear-gradient(#e8f0f9, #dce8f5 46%, #cbdcf2 50%, #dae8f6); }
  .cap span { margin-left: 8px; letter-spacing: -.26px; }
  .info { margin-top: 9px; height: 175px; }
  .r { display: grid; border-bottom: 1px solid #bdd6ea; }
  .one { grid-template-columns: 250px 1fr; height: 30px; }
  .three { grid-template-columns: 250px 335px 250px 335px 250px 1fr; }
  .tall { height: 58px; }
  .short { height: 29px; }
  .r.last { border-bottom: 0; height: 29px; }
  .r label { display: flex; align-items: center; justify-content: flex-end; background: #f8f9fe; border-right: 1px solid #c0d7ea; padding-bottom: 3px; }
  .r.one label { padding-bottom: 5px; }
  .tall label { padding-bottom: 5px; }
  .spread { word-spacing: 6px; }
  .r p { display: flex; align-items: center; padding: 0 0 0 6px; line-height: 28px; background: rgba(255,255,255,.8); }
  .r.one p { padding-top: 1px; }
  .r.short p { line-height: 26px; }
  .tall p { padding-bottom: 1px; }
  .r p:not(:last-child) { border-right: 1px solid #dbe4ec; }

  .list { margin-top: 8px; }
  .list .cap { height: 28px; line-height: 27px; }
  .g { display: grid; grid-template-columns: 46px 523px 264px 156px 191px 157px 167px 1fr; }
  .g > span { display: flex; align-items: center; justify-content: center; }
  .head { grid-template-columns: 45px 523px 264px 156px 191px 157px 167px 1fr; height: 27px; background: #f5f5f5; border-bottom: 1px solid #e4e6e8; font-weight: 700; letter-spacing: 1px; }
  .head > span:not(:last-child) { border-right: 1px solid #e3e3e3; }
  .head > span { padding-bottom: 6px; }
  .row { height: 29px; border-bottom: 1px solid #bdd6ea; }
  .row + .row { height: 30px; }
  .row > span { padding: 0 3px 2px 0; }
  .row > .num { padding: 1px 0 0; }
  .row > span:not(:last-child) { border-right: 1px solid #bdd6ea; }
  .row > .code { color: #a9a9a9; padding-left: 6px; }
  .row > .loc { padding: 0 5px 4px 0; }
  .row > .pics { justify-content: flex-start; padding: 0 0 4px 35px; gap: 10px; }
  .pics svg:last-child { margin-left: 17px; }
  .foot { height: 21px; background: #f9f9f9; }
  .actions { display: flex; gap: 20px; padding: 8px 0 0 676px; }
  .mid { width: 110px; }
  .scroll { width: 15px; margin-left: auto; padding: 6px 4px 2px 3px; border-left: 1px solid #efefef; background: #f6f6f6; display: flex; flex-direction: column; justify-content: space-between; }
  .scroll i { border: 4px solid transparent; height: 8px; width: 8px; }
  .scroll .up { border-bottom-color: #b5b5b5; }
  .scroll .down { border-top-color: #b5b5b5; }

  footer { height: 30px; flex: none; padding: 0 0 0 911px; border-bottom: 1px solid #4c8fd3; background: linear-gradient(#b8dbff, #98c7f3); color: #fff; font: 700 13.2px/31px "Liberation Serif", "Noto Sans CJK SC", serif; }
  footer span { font-size: 13px; }
  .under { height: 4px; background: linear-gradient(#8c97a5 1px, #f1eeee 1px); }

  .dialog { position: absolute; left: 616px; top: 596px; width: 721px; height: 361px; padding: 0 4px 4px 4px; border: 1px solid #35465f; border-radius: 5px 5px 0 0; background: linear-gradient(90deg, #6db0f5, #3f7fd0 3px, #3f7fd0 717px, #2f64ab); color: #000; }
  .dhead { height: 27px; margin: 0 -4px; padding-left: 4px; display: flex; align-items: flex-start; border-radius: 4px 4px 0 0; background: linear-gradient(#66a5f2, #569cef 50%, #488fe6); border-bottom: 1px solid #275ca4; color: #fff; }
  .dhead svg { margin-top: 4px; }
  .dhead b { margin: 1px 0 0 8px; line-height: 20px; letter-spacing: 1px; }
  .dctl { margin: 0 5px 0 auto; height: 19px; display: flex; border: 1px solid #2e5fae; border-top: 0; border-radius: 0 0 4px 4px; }
  .dctl span { width: 28px; display: grid; place-items: center; background: linear-gradient(#6298e2, #5180d3); }
  .dhead .dctl svg { margin: 0; }
  .dctl .x { width: 45px; border-left: 1px solid #2e5fae; }
  .dbody { height: 328px; background: linear-gradient(#fff 210px, transparent 240px), radial-gradient(ellipse 460px 160px at 65% 80%, #f1f6fa, #fcfeff); background-color: #fff; border-bottom: 1px solid #2f68b5; }
  .dtable { width: 693px; height: 218px; display: grid; grid-template: 25px 192px / 346px 1fr; border: 1px solid #74aae2; background: #fff; }
  .dtop { grid-column: 1 / 3; display: flex; align-items: center; gap: 7px; padding: 0 0 1px 7px; background: #e8eff8; border-bottom: 1px solid #74aae2; }
  .dtop span { margin-top: -2px; }
  .radio { width: 12px; height: 12px; border-radius: 50%; border: 1px solid #777; border-right-color: #e4e4e4; border-bottom-color: #e4e4e4; background: radial-gradient(#000 3.200px, #fff 4px); }
  .dleft { border-right: 1px solid #74aae2; }
  .drow { height: 24px; display: flex; border-bottom: 1px solid #74aae2; }
  .drow label { width: 138px; background: #e8eff8; border-right: 1px solid #74aae2; text-align: right; line-height: 20px; white-space: nowrap; }
  .dval { padding: 1px 0 0 6px; line-height: 19px; }
  .sel { width: 161px; height: 22px; display: flex; align-items: center; justify-content: space-between; padding: 0 5px 1px 2px; border: 1px solid #e2e3ea; border-top-color: #abadb3; border-radius: 2px; font-size: 14px; background: #fff; }
  .sel span { width: 136px; padding-left: 1px; line-height: 15px; height: 16px; }
  .sel i { border: 4px solid transparent; border-top: 5px solid #000; border-bottom: 0; }
  .sel.focus { border-color: #b5cfe7; border-top-color: #3d7bad; }
  .sel.focus span { background: #3399ff; color: #fff; outline: 1px dotted #c97a2e; outline-offset: -1px; }
  .save { border-bottom: 0; justify-content: center; line-height: 22px; color: #0000e6; padding-left: 6px; }
  .dright { padding: 4px 0 0 11px; line-height: 20px; }

  .taskbar { height: 40px; flex: none; display: flex; background: radial-gradient(ellipse 200px 10px at 1000px 28px, rgba(10,40,70,.5), transparent), linear-gradient(180deg, #3c4f63 0, #b9cbdc 1px, #8ea3bc 2px, #839ab5 40%, #50708f 54%, #24486b 66%, #1b4e78 80%, #1f5f92); border-top: 1px solid #2b3a4a; }
  .orb { margin: 0 0 0 8px; }
  .cp { margin: 7px 16px 0 27px; }
  .task { width: 160px; margin-right: 2px; height: 38px; display: flex; align-items: center; gap: 6px; padding: 0 0 1px 9px; border: 1px solid #101c28; border-radius: 3px; box-shadow: inset 0 0 0 1px rgba(220,235,245,.6); background: linear-gradient(165deg, rgba(255,255,255,.3), rgba(255,255,255,.15) 45%, transparent 46%), linear-gradient(#a4b3c6, #7f93a8 50%, #2d5673 58%, #4b87a8); color: #fff; font: 12.1px/18px "Open Sans", "Noto Sans CJK SC", sans-serif; white-space: nowrap; }
  .task svg { width: 30px; }
  .task span { text-shadow: 0 0 3px #234; }
  .task.active { background: linear-gradient(165deg, rgba(255,255,255,.55), rgba(255,255,255,.25) 45%, transparent 46%), linear-gradient(#c3ced9, #a9b8c6 50%, #7c98ab 58%, #a3c3cf); }
  .task.lit { background: linear-gradient(165deg, rgba(255,255,255,.45), rgba(255,255,255,.2) 45%, transparent 46%), linear-gradient(#b2bfcf, #8fa1b5 50%, #315a77 58%, #4b87a8); }
  .tray { display: flex; align-items: center; gap: 8px; height: 40px; padding-bottom: 1px; margin-left: auto; }
  .kb { margin: -4px 6px 0 0; }
  .clock { width: 60px; margin: 2px 8px 0 15px; display: flex; flex-direction: column; align-items: center; color: #fff; font: 12.5px/18px "Open Sans", sans-serif; }
  .peek { width: 13px; height: 39px; margin-right: 2px; border: 1px solid #9fb3c8; background: linear-gradient(#8da1b8, #45627f 45%, #14304f 60%, #23598a); box-shadow: inset 0 0 0 1px #1a2c40; }
</style>
